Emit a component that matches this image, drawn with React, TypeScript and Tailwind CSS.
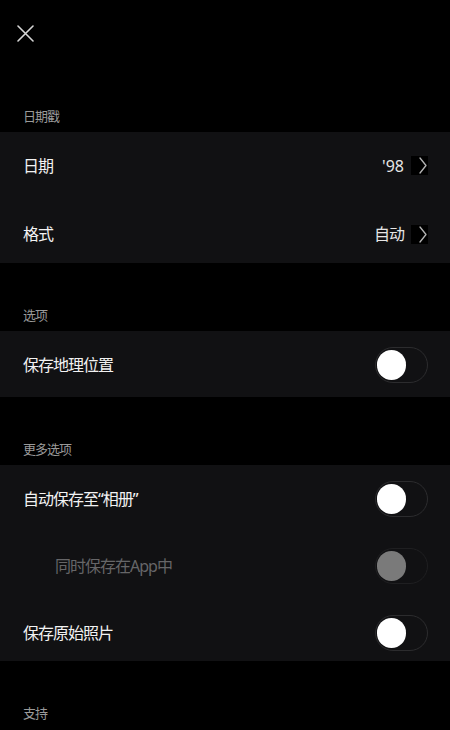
import React from "react";

const font = { fontFamily: '"Noto Sans", "Noto Sans CJK SC", sans-serif' };

function Toggle({ disabled = false }: { disabled?: boolean }) {
  return (
    <div
      className={`relative w-[53px] h-[36px] rounded-full border ${
        disabled ? "border-[#1f1f21]" : "border-[#2c2c2e]"
      }`}
    >
      <div
        className={`absolute left-[1px] top-[2px] w-[29px] h-[30px] rounded-full ${
          disabled ? "bg-[#7a7a7a]" : "bg-white"
        }`}
      />
    </div>
  );
}

function Chevron() {
  return (
    <div className="w-[17px] h-[19px] bg-black flex items-center justify-end pr-[1px]">
      <svg width="8" height="17" viewBox="0 0 8 17" fill="none">
        <path d="M1 1 L7 8.5 L1 16" stroke="#b5b5b5" strokeWidth="1.3" strokeLinecap="round" strokeLinejoin="round" />
      </svg>
    </div>
  );
}

function Header({ children, mt }: { children: React.ReactNode; mt?: string }) {
  return (
    <div className={`px-[23px] pb-[8px] ${mt ?? ""}`}>
      <div className="text-[13px] leading-[16px] tracking-[-1px] text-[#9a9a9a]">{children}</div>
    </div>
  );
}

export default function App() {
  return (
    <div className="w-[450px] h-[730px] bg-black overflow-hidden text-white" style={font}>
      <div className="h-[108px] pt-[25px] pl-[17px]">
        <svg width="17" height="17" viewBox="0 0 17 17" fill="none">
          <path d="M1 1 L16 16 M16 1 L1 16" stroke="#d6d6d6" strokeWidth="1.6" strokeLinecap="round" />
        </svg>
      </div>

      <Header>日期戳</Header>
      <div className="bg-[#111113]">
        <div className="h-[67px] flex items-center justify-between pl-[23px] pr-[22px]">
          <span className="text-[16px] tracking-[-1px] text-[#f2f2f2]">日期</span>
          <div className="flex items-center gap-[7px]">
            <span className="text-[16px] text-[#e6e6e6]">'98</span>
            <Chevron />
          </div>
        </div>
        <div className="h-[64px] pt-[6px] flex items-center justify-between pl-[23px] pr-[22px]">
          <span className="text-[16px] tracking-[-1px] text-[#f2f2f2]">格式</span>
          <div className="flex items-center gap-[7px]">
            <span className="text-[16px] tracking-[-1px] text-[#e6e6e6]">自动</span>
            <Chevron />
          </div>
        </div>
      </div>

      <Header mt="mt-[44px]">选项</Header>
      <div className="bg-[#111113]">
        <div className="h-[66px] pt-[2px] flex items-center justify-between pl-[23px] pr-[22px]">
          <span className="text-[16px] tracking-[-1px] text-[#f2f2f2]">保存地理位置</span>
          <Toggle />
        </div>
      </div>

      <Header mt="mt-[44px]">更多选项</Header>
      <div className="bg-[#111113]">
        <div className="h-[67px] flex items-center justify-between pl-[23px] pr-[22px]">
          <span className="text-[16px] tracking-[-1px] text-[#f2f2f2]">自动保存至“相册”</span>
          <Toggle />
        </div>
        <div className="h-[67px] flex items-center justify-between pl-[55px] pr-[22px]">
          <span className="text-[16px] tracking-[-1px] text-[#666668]">同时保存在App中</span>
          <Toggle disabled />
        </div>
        <div className="h-[62px] pt-[6px] flex items-center justify-between pl-[23px] pr-[22px]">
          <span className="text-[16px] tracking-[-1px] text-[#f2f2f2]">保存原始照片</span>
          <Toggle />
        </div>
      </div>

      <Header mt="mt-[44px]">支持</Header>
    </div>
  );
}
